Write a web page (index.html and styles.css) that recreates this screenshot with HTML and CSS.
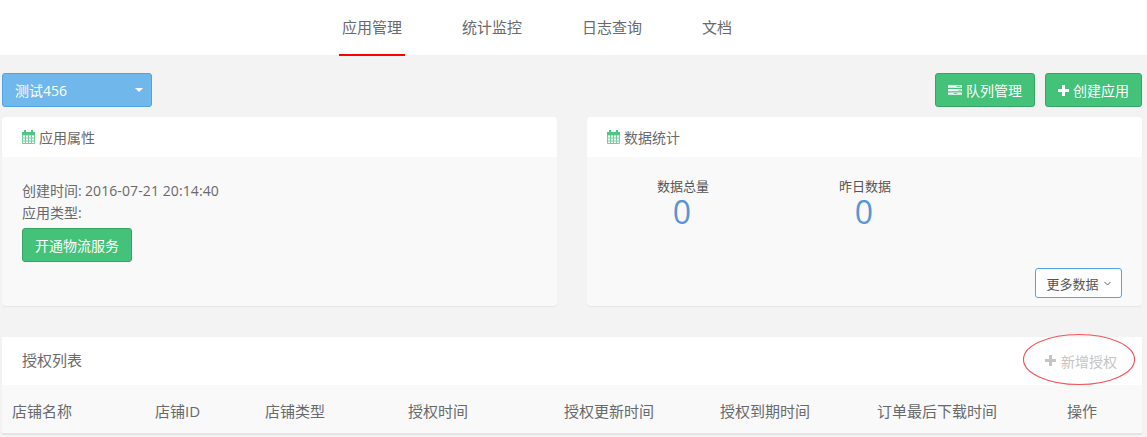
FILE: index.html
```html
<!DOCTYPE html>
<html lang="zh">
<head>
<meta charset="utf-8">
<title>应用管理</title>
<link rel="stylesheet" href="styles.css">
</head>
<body>
<header class="topbar">
  <nav class="tabs">
    <a class="tab active">应用管理</a>
    <a class="tab">统计监控</a>
    <a class="tab">日志查询</a>
    <a class="tab">文档</a>
  </nav>
</header>
<main class="page">
  <div class="toolbar">
    <div class="select"><span>测试456</span><i class="caret"></i></div>
    <div class="actions">
      <a class="btn green">
        <svg class="ico" width="15" height="12" viewBox="0 0 15 12"><path fill="#fff" d="M0 1h15v2.500H0zM0 4.800h15v2.500H0zM0 8.600h15v2.400H0z"/><path fill="#44c27a" d="M9 2h4.500v.8H9zM11 5.700h3v.8h-3zM6 9.400h4v.8H6z"/></svg>
        队列管理</a>
      <a class="btn green">
        <svg class="ico" width="11" height="11" viewBox="0 0 11 11"><path fill="#fff" d="M4 0h3v4h4v3H7v4H4V7H0V4h4z"/></svg>
        创建应用</a>
    </div>
  </div>
  <div class="cards">
    <section class="card">
      <h3 class="card-head">
        <svg class="cal" width="13" height="14" viewBox="0 0 13 14"><path fill="none" stroke="#6fd09a" d="M.5 2.500h12v11H.5zM.5 5h12M.5 8h12M.5 11h12M3.500 5v8.500M6.500 5v8.500M9.500 5v8.500"/><path fill="#4fc585" d="M0 2h13v3H0zM2 0h2v2H2zM9 0h2v2H9z"/></svg>
        应用属性</h3>
      <div class="card-body info">
        <p class="line">创建时间:&nbsp; <span class="date">2016-07-21 20:14:40</span></p>
        <p class="line">应用类型:</p>
        <a class="btn green open">开通物流服务</a>
      </div>
    </section>
    <section class="card">
      <h3 class="card-head">
        <svg class="cal" width="13" height="14" viewBox="0 0 13 14"><path fill="none" stroke="#6fd09a" d="M.5 2.500h12v11H.5zM.5 5h12M.5 8h12M.5 11h12M3.500 5v8.500M6.500 5v8.500M9.500 5v8.500"/><path fill="#4fc585" d="M0 2h13v3H0zM2 0h2v2H2zM9 0h2v2H9z"/></svg>
        数据统计</h3>
      <div class="card-body stats">
        <div class="stat-row">
          <div class="stat"><div class="stat-label">数据总量</div><div class="stat-num">0</div></div>
          <div class="stat"><div class="stat-label">昨日数据</div><div class="stat-num">0</div></div>
        </div>
        <div class="more-row">
          <a class="more">更多数据
            <svg width="7" height="5" viewBox="0 0 7 5"><path fill="none" stroke="#666" d="M.5 1l3 3 3-3"/></svg>
          </a>
        </div>
      </div>
    </section>
  </div>
  <section class="list">
    <div class="list-head">
      <span class="list-title">授权列表</span>
      <a class="add">
        <svg width="11" height="11" viewBox="0 0 11 11"><path fill="#c4c4c4" d="M4 0h3v4h4v3H7v4H4V7H0V4h4z"/></svg>
        新增授权</a>
      <svg class="ring" width="114" height="53" viewBox="0 0 114 53"><ellipse cx="57" cy="26.500" rx="55.500" ry="25" fill="none" stroke="#f4555c" stroke-width="1.200"/></svg>
    </div>
    <div class="thead">
      <span>店铺名称</span>
      <span>店铺ID</span>
      <span>店铺类型</span>
      <span>授权时间</span>
      <span>授权更新时间</span>
      <span>授权到期时间</span>
      <span>订单最后下载时间</span>
      <span>操作</span>
    </div>
  </section>
</main>
</body>
</html>
```
FILE: styles.css
```css
* { box-sizing: border-box; }
html, body { margin: 0; padding: 0; height: 437px; overflow: hidden; }
body {
  background: #f3f3f3;
  color: #676a6c;
  font-family: "Open Sans", "Noto Sans CJK SC", sans-serif;
  font-size: 14px;
}
.topbar { height: 55px; background: #fff; }
.tabs { display: flex; padding-left: 339px; }
.tab {
  width: 66px;
  margin-right: 54px;
  height: 56px;
  line-height: 54px;
  text-align: center;
  color: #676a6c;
  font-size: 15px;
  white-space: nowrap;
}
.tab:last-child { width: 30px; margin-left: 3px; }
.tab.active { border-bottom: 2px solid #f00; }
.page { padding: 18px 5px 0 2px; }
.toolbar { display: flex; justify-content: space-between; height: 34px; }
.select {
  width: 150px;
  height: 34px;
  display: flex;
  align-items: center;
  justify-content: space-between;
  padding: 0 8px 0 12px;
  background: #70b8ec;
  border: 1px solid #4fa3e3;
  border-radius: 3px;
  color: #fff;
}
.caret {
  width: 0;
  height: 0;
  border-left: 4px solid transparent;
  border-right: 4px solid transparent;
  border-top: 4px solid #fff;
}
.actions { display: flex; gap: 10px; }
.btn {
  display: inline-flex;
  align-items: center;
  justify-content: center;
  gap: 4px;
  height: 34px;
  padding: 0 12px;
  border-radius: 3px;
  font-size: 14px;
  white-space: nowrap;
}
.actions .btn:first-child { width: 100px; }
.actions .btn:last-child { width: 97px; }
.green { background: #44c27a; border: 1px solid #37a568; color: #fff; }
.cards { display: flex; gap: 30px; margin-top: 10px; }
.card {
  flex: 1;
  height: 189px;
  background: #f9f9f9;
  border-radius: 4px;
  box-shadow: 0 1px 1px rgba(0,0,0,.06);
  overflow: hidden;
}
.card-head {
  display: flex;
  align-items: center;
  gap: 4px;
  height: 40px;
  margin: 0;
  padding-left: 20px;
  background: #fff;
  font-size: 14px;
  font-weight: 400;
  color: #676a6c;
}
.info { padding: 23px 20px 0; }
.line { margin: 0; height: 22px; line-height: 22px; }
.date { margin-left: -4px; letter-spacing: .1px; }
.open { width: 110px; margin-top: 4px; }
.stat-row { display: flex; padding-top: 19px; padding-left: 38px; }
.stat { text-align: center; width: 54px; margin-left: 31px; margin-right: 97px; }
.stat-label { line-height: 21px; color: #555; font-size: 13px; white-space: nowrap; }
.stat-num { font-size: 32px; line-height: 30px; padding-right: 2px; color: #5b93d6; }
.more-row { display: flex; justify-content: flex-end; padding: 41px 20px 0 0; }
.more {
  display: inline-flex;
  align-items: center;
  justify-content: center;
  gap: 5px;
  width: 87px;
  height: 30px;
  background: #fff;
  border: 1px solid #4fa6e3;
  border-radius: 3px;
  color: #555;
  font-size: 13px;
}
.list { margin-top: 31px; position: relative; }
.list-head {
  display: flex;
  justify-content: space-between;
  align-items: center;
  height: 48px;
  padding: 0 25px 3px 20px;
  background: #fff;
}
.list-title { color: #676a6c; font-size: 15px; }
.add { display: flex; align-items: center; gap: 5px; color: #c4c4c4; padding-top: 2px; }
.ring { position: absolute; right: 6px; top: -4px; }
.thead {
  display: grid;
  grid-template-columns: 143px 110px 143px 156px 156px 157px 190px 1fr;
  align-items: center;
  height: 50px;
  padding-top: 2px;
  padding-left: 10px;
  background: #f9f9f9;
  border-bottom: 2px solid #e4e4e4;
  font-size: 15px;
  white-space: nowrap;
}
```
